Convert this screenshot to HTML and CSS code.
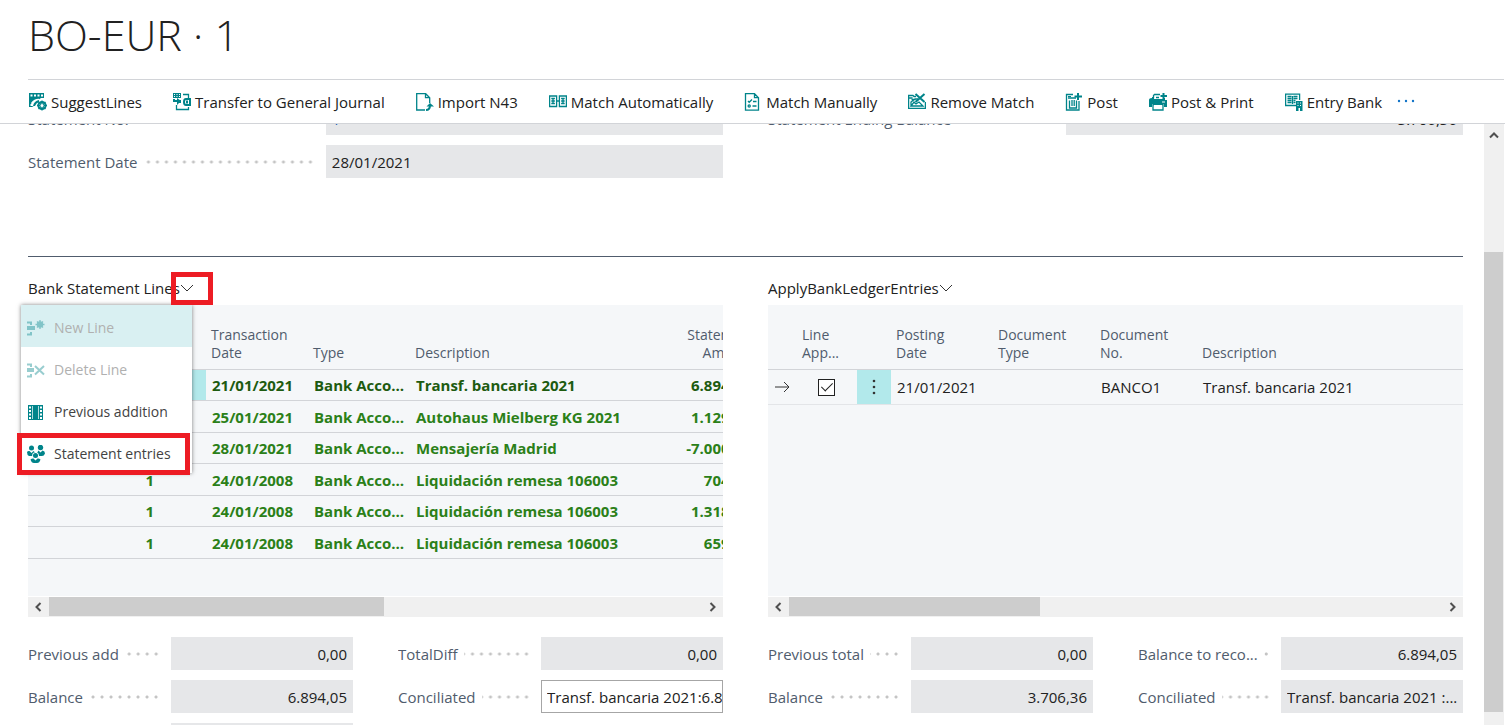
FILE: index.html
```html
<!DOCTYPE html>
<html lang="en">

<head>
    <meta charset="UTF-8">
    <meta name="viewport" content="width=device-width, initial-scale=1.0">
    <title>BO-EUR · 1</title>
    <link rel="stylesheet" href="styles.css">
</head>

<body>

    <header>
        <h1>BO-EUR · 1</h1>
        <nav class="toolbar">
            <button>
                <svg class="icon" viewBox="0 0 18 18"><path d="M0 0h15v5h-3l-7 5v4H0z"/><path class="w" d="M1.5 1.5h2v2h-2zM5 1.5h2v2H5zM8.500 1.500h2v2h-2zM12 1.500h2v2h-2zM1.500 11h2v2h-2zM2 10q4-5 9-4l-3 3-1 4-3 1z"/><path d="M4 13q1-5 6-6v2q-3 1-4 4z"/><circle class="s2" cx="13" cy="12.500" r="3.600"/><path class="s" d="M13 7.500v10M8 12.500h10M9.500 9l7 7M9.500 16l7-7"/><circle class="w" cx="13" cy="12.500" r="1.500"/></svg>
                SuggestLines
            </button>
            <button>
                <svg class="icon" viewBox="0 0 18 18"><path d="M0 0h8v5H0z"/><path class="w" d="M1 1h1v1H1zM3.500 1h1v1h-1zM6 1h1v1H6zM1 3h1v1H1zM3.500 3h1v1h-1zM6 3h1v1H6z"/><path class="s2" d="M1 6v2h4M7 7v3"/><path d="M4 5l4 3-4 4z"/><path class="s" d="M10 1.500h5.500v4M3.500 12v4.500h12V14"/><path class="s2" d="M17 6h-4q-2 0-2 3t2 3h4zM14 7.500v3"/></svg>
                Transfer to General Journal
            </button>
            <button>
                <svg class="icon" viewBox="0 0 18 18"><path class="s" d="M9 17H.700V.700h9l4 4V10M9.500.700v4h4"/><path class="s2" d="M10 17q4 0 4-5"/><path d="M10.500 13.500L14 10l4 3.500z"/></svg>
                Import N43
            </button>
            <button>
                <svg class="icon" viewBox="0 0 18 18"><path class="s" d="M.600 3h7v10.500h-7zM10.400 3h7v10.500h-7zM7.600 8h3M2.300 5.500h3.600M2.300 8h3.600M2.300 10.500h3.600M12.100 5.500h3.600M12.100 8h3.600M12.100 10.500h3.600M4 5v6M14 5v6"/></svg>
                Match Automatically
            </button>
            <button>
                <svg class="icon" viewBox="0 0 18 18"><path class="s" d="M1.500.700h9l4 4v12.500h-13zM10.500.700v4h4M4 8l1.200 1.300L8 6.500M9 8.500h3.500M8.500 13h4"/><circle class="s" cx="5.200" cy="13" r="1.100"/></svg>
                Match Manually
            </button>
            <button>
                <svg class="icon" viewBox="0 0 18 18"><path class="s" d="M8 3.500H6l-1-1H.600v12.900h16.800V9M.600 5h4"/><path class="s" d="M3 13V9l4-3h3M3 13h12l-4-4-3 2-2-2zM3.500 6.500h4"/><path class="s2" d="M7.500 1l9 8M16.500 1l-9 8"/></svg>
                Remove Match
            </button>
            <button>
                <svg class="icon" viewBox="0 0 18 18"><path class="s" d="M8 1.500H1.500v15.500h12.500V8M3 5h8M4.500 7.500v7.500h7V7.500M7 7v6M9.200 7v6"/><path d="M3 3h3v1H3z"/><path class="s2" d="M13 0v7M9.500 3.500H17"/></svg>
                Post
            </button>
            <button>
                <svg class="icon" viewBox="0 0 18 18"><path d="M3 4h2v2h9V5h2v2h2v7h-3v-3H3v3H0V7q0-2 3-2z"/><path class="s" d="M4.500 5.500v-3l1-1H11M4 11.500h10v5.500H4zM7 4.500h3"/><path class="s2" d="M14.500 0v6M11.500 3H18"/><path class="w" d="M13 8.500h3v1h-3zM5 12h8v4H5z"/></svg>
                Post &amp; Print
            </button>
            <button>
                <svg class="icon" viewBox="0 0 18 18"><path class="s" d="M11 12.500H.600V1.200h14V7M2.500 3.500h4M8.500 3.500h4M2.500 5.500h4M8.500 5.500h4M2.500 7.500h4M8.500 7.500h2M2.500 9.500h4M8.500 9.500h2M7.500 3v8"/><path d="M11 8h6.500v10H15v-3h-1.500v3H11z"/><path class="w" d="M12.500 9.500h1v1h-1zM15 9.500h1v1h-1zM12.500 12h1v1h-1zM15 12h1v1h-1z"/></svg>
                Entry Bank
            </button>
            <button class="more" aria-label="More options">
                <svg viewBox="0 0 18 18"><circle cx="2" cy="8" r="1.200"/><circle cx="9" cy="8" r="1.200"/><circle cx="16" cy="8" r="1.200"/></svg>
            </button>
        </nav>
    </header>

    <main>
        <div class="content">
            <section class="general">
                <div class="field">
                    <label for="statement-no">Statement No.</label>
                    <input id="statement-no" class="link" value="1" readonly>
                </div>
                <div class="field">
                    <label for="ending-balance">Statement Ending Balance</label>
                    <input id="ending-balance" class="num" value="3.706,36" readonly>
                </div>
                <div class="field">
                    <label for="statement-date">Statement Date</label>
                    <input id="statement-date" value="28/01/2021" readonly>
                </div>
            </section>

            <div class="parts">
                <section class="part">
                    <h2>
                        <button class="part-title">Bank Statement Lines<svg class="chevron" viewBox="0 0 14 8"><path d="M1 1l6 6 6-6"/></svg></button>
                        <span class="mark mark-arrow"></span>
                    </h2>
                    <ul class="menu">
                        <li><button class="selected" disabled><svg class="icon" viewBox="0 0 18 18"><path d="M0 7h8v4H0z"/><path class="s2" d="M0 3.500h4V6M0 15.500h4V13"/><path class="s" d="M13 1v9M8.500 5.500h9M10 2.500l6 6M16 2.500l-6 6"/><circle class="s" cx="13" cy="5.500" r="2.500"/></svg>New Line</button></li>
                        <li><button disabled><svg class="icon" viewBox="0 0 18 18"><path d="M0 7h7v4H0z"/><path class="s2" d="M0 3.500h4V6M0 15.500h4V13"/><path class="s2" d="M8 5l9 8.500M17 5l-9 8.500"/></svg>Delete Line</button></li>
                        <li><button><svg class="icon" viewBox="0 0 18 18"><path d="M1 2h15v15H1z"/><path class="w" d="M2 3.500h2v2H2zM2 7h2v2H2zM2 10.500h2v2H2zM2 14h2v2H2zM13 3.500h2v2h-2zM13 7h2v2h-2zM13 10.500h2v2h-2zM13 14h2v2h-2zM5 3h.700v13H5zM11.300 3h.700v13h-.700z"/></svg>Previous addition</button></li>
                        <li><button><svg class="icon" viewBox="0 0 18 18"><circle cx="4.500" cy="3" r="2.500"/><circle cx="13.500" cy="2.500" r="2.700"/><path d="M0 7q1-1.500 2.500-1L4.500 8l2-2 2 2-2 3H2q-2-1-2-4zM10 8l1.500-2.500 2 2 2-2Q18 6 18 8.500 17 11 15 11h-3z"/><circle class="w" cx="8.500" cy="10.500" r="3.300"/><circle cx="8.500" cy="10.500" r="2.500"/><path d="M3.500 14.500Q5 13 6.500 13.500l2 2 2-2q1.500-.500 3 1-1 3.500-3.500 3.500H7q-2.500 0-3.500-3.500z"/></svg>Statement entries</button><span class="mark mark-item"></span></li>
                    </ul>
                    <div class="grid">
                        <table class="lines">
                            <colgroup>
                                <col class="c-no"><col class="c-dots"><col class="c-text"><col class="c-text"><col class="c-desc"><col class="c-amount">
                            </colgroup>
                            <thead>
                                <tr><th></th><th></th><th>Transaction<br>Date</th><th>Type</th><th>Description</th><th class="num">Statement<br>Amount</th></tr>
                            </thead>
                            <tbody>
                                <tr class="current"><td></td><td class="dots"></td><td>21/01/2021</td><td>Bank Account</td><td>Transf. bancaria 2021</td><td class="num">6.894,05</td></tr>
                                <tr><td></td><td></td><td>25/01/2021</td><td>Bank Account</td><td>Autohaus Mielberg KG 2021</td><td class="num">1.129,00</td></tr>
                                <tr><td></td><td></td><td>28/01/2021</td><td>Bank Account</td><td>Mensajería Madrid</td><td class="num">-7.000,00</td></tr>
                                <tr><td class="num">1</td><td></td><td>24/01/2008</td><td>Bank Account</td><td>Liquidación remesa 106003</td><td class="num">704,00</td></tr>
                                <tr><td class="num">1</td><td></td><td>24/01/2008</td><td>Bank Account</td><td>Liquidación remesa 106003</td><td class="num">1.318,00</td></tr>
                                <tr><td class="num">1</td><td></td><td>24/01/2008</td><td>Bank Account</td><td>Liquidación remesa 106003</td><td class="num">659,00</td></tr>
                            </tbody>
                        </table>
                    </div>
                    <div class="hscroll">
                        <button aria-label="Scroll left"><svg viewBox="0 0 8 10"><path d="M5.500 1l-4 4 4 4"/></svg></button>
                        <div class="track"><div class="thumb wide"></div></div>
                        <button aria-label="Scroll right"><svg viewBox="0 0 8 10"><path d="M1.500 1l4 4-4 4"/></svg></button>
                    </div>
                    <div class="totals">
                        <div class="field">
                            <label for="previous-add">Previous add</label>
                            <input id="previous-add" class="num" value="0,00" readonly>
                        </div>
                        <div class="field">
                            <label for="total-diff">TotalDiff</label>
                            <input id="total-diff" class="num" value="0,00" readonly>
                        </div>
                        <div class="field">
                            <label for="balance">Balance</label>
                            <input id="balance" class="num" value="6.894,05" readonly>
                        </div>
                        <div class="field">
                            <label for="conciliated">Conciliated</label>
                            <input id="conciliated" class="long editable" value="Transf. bancaria 2021:6.8">
                        </div>
                        <div class="field">
                            <label for="total"></label>
                            <input id="total" class="num" aria-label="Total" readonly>
                        </div>
                    </div>
                </section>

                <section class="part">
                    <h2>
                        <button class="part-title">ApplyBankLedgerEntries<svg class="chevron" viewBox="0 0 14 8"><path d="M1 1l6 6 6-6"/></svg></button>
                    </h2>
                    <div class="grid">
                        <table class="entries">
                            <colgroup>
                                <col class="c-arrow"><col class="c-check"><col class="c-dots"><col class="c-text"><col class="c-text"><col class="c-text"><col>
                            </colgroup>
                            <thead>
                                <tr><th></th><th>Line<br>App...</th><th></th><th>Posting<br>Date</th><th>Document<br>Type</th><th>Document<br>No.</th><th>Description</th></tr>
                            </thead>
                            <tbody>
                                <tr>
                                    <td><svg class="arrow" viewBox="0 0 16 12"><path d="M1 6h14M10 1l5 5-5 5"/></svg></td>
                                    <td class="check"><input type="checkbox" aria-label="Line Applied" checked></td>
                                    <td class="dots"><button aria-label="Show more options"><svg viewBox="0 0 4 18"><circle cx="2" cy="3" r="1.300"/><circle cx="2" cy="9" r="1.300"/><circle cx="2" cy="15" r="1.300"/></svg></button></td>
                                    <td>21/01/2021</td><td></td><td>BANCO1</td><td>Transf. bancaria 2021</td>
                                </tr>
                            </tbody>
                        </table>
                    </div>
                    <div class="hscroll">
                        <button aria-label="Scroll left"><svg viewBox="0 0 8 10"><path d="M5.500 1l-4 4 4 4"/></svg></button>
                        <div class="track"><div class="thumb"></div></div>
                        <button aria-label="Scroll right"><svg viewBox="0 0 8 10"><path d="M1.500 1l4 4-4 4"/></svg></button>
                    </div>
                    <div class="totals">
                        <div class="field">
                            <label for="previous-total">Previous total</label>
                            <input id="previous-total" class="num" value="0,00" readonly>
                        </div>
                        <div class="field">
                            <label for="balance-reconcile">Balance to reco...</label>
                            <input id="balance-reconcile" class="num" value="6.894,05" readonly>
                        </div>
                        <div class="field">
                            <label for="ledger-balance">Balance</label>
                            <input id="ledger-balance" class="num" value="3.706,36" readonly>
                        </div>
                        <div class="field">
                            <label for="ledger-conciliated">Conciliated</label>
                            <input id="ledger-conciliated" class="long" value="Transf. bancaria 2021 :..." readonly>
                        </div>
                    </div>
                </section>
            </div>
        </div>

        <div class="vscroll">
            <button aria-label="Scroll up"><svg viewBox="0 0 10 8"><path d="M1 6.500l4-4 4 4"/></svg></button>
            <div class="vthumb"></div>
        </div>
    </main>

</body>

</html>
```
FILE: styles.css
```css
* {
    box-sizing: border-box;
}

body {
    font-family: "Segoe UI", "Open Sans", "Noto Sans", sans-serif;
    font-size: 15px;
    line-height: 20px;
    margin: 0;
    height: 100vh;
    overflow: hidden;
    display: flex;
    flex-direction: column;
    background-color: #fff;
    color: #212121;
}

button,
input {
    font: inherit;
    color: inherit;
}

button {
    background: none;
    border: none;
    padding: 0;
    cursor: pointer;
}

svg {
    display: block;
}

/* icons */

.icon {
    width: 18px;
    height: 18px;
    flex: none;
    fill: #00848a;
}

.icon .w {
    fill: #fff;
}

.icon .s,
.icon .s2 {
    fill: none;
    stroke: #00848a;
    stroke-width: 1.3;
}

.icon .s2 {
    stroke-width: 2;
}

/* header */

header {
    border-bottom: 1px solid #d2d4d8;
}

h1 {
    margin: 0 1px 0 28px;
    padding: 5px 0 14px;
    border-bottom: 1px solid #d2d4d8;
    font-size: 43px;
    line-height: 60px;
    font-weight: 300;
}

.toolbar {
    display: flex;
    gap: 31px;
    height: 43px;
    padding: 0 0 0 29px;
}

.toolbar button {
    display: flex;
    align-items: center;
    gap: 4px;
    white-space: nowrap;
}

.toolbar .more {
    margin-left: -16px;
}

.more svg {
    width: 18px;
    height: 18px;
    fill: #1173c7;
}

/* page body */

main {
    flex: 1;
    min-height: 0;
    display: flex;
    overflow: hidden;
}

.content {
    flex: 1;
    min-width: 0;
    margin-top: -22px;
    padding: 0 21px 0 28px;
}

.general {
    display: grid;
    grid-template-columns: 1fr 1fr;
    gap: 10px 45px;
    padding-bottom: 78px;
    border-bottom: 1px solid #505c6d;
}

.field {
    display: grid;
    grid-template-columns: 3fr 4fr;
    height: 33px;
}

.field label {
    display: flex;
    align-items: center;
    padding-right: 10px;
    color: #505c6d;
    white-space: nowrap;
    overflow: hidden;
}

/* dotted leader between label and value */
.field label::after {
    content: "";
    flex: 1;
    height: 10px;
    margin-left: 6px;
    background: radial-gradient(circle at 4px 5px, #c4c4c4 1px, transparent 2px) right center / 9px 10px repeat-x;
}

.field input {
    width: 100%;
    min-width: 0;
    border: 1px solid #e6e7e9;
    border-radius: 0;
    background-color: #e6e7e9;
    padding: 0 5px;
    outline: none;
}

.field .link {
    color: #1a5fb4;
}

.field .long {
    padding-right: 0;
}

.field .editable {
    border-color: #a6a6a6;
    background-color: #fff;
}

.num {
    text-align: right;
}

/* the two parts */

.parts {
    display: grid;
    grid-template-columns: 1fr 1fr;
    gap: 45px;
}

.part {
    min-width: 0;
    position: relative;
}

h2 {
    margin: 0;
    height: 48px;
    padding-top: 21px;
    font-size: 15px;
    line-height: 20px;
    font-weight: 400;
    position: relative;
}

.part-title {
    display: flex;
    align-items: center;
}

.chevron {
    width: 14px;
    height: 8px;
    fill: none;
    stroke: #333;
}

.grid {
    height: 291px;
    background-color: #f5f7f9;
    overflow: hidden;
}

table {
    border-collapse: separate;
    border-spacing: 0;
    table-layout: fixed;
    width: 100%;
}

.lines {
    width: 732px;
}

.c-no {
    width: 144px;
}

.c-dots {
    width: 34px;
}

.c-text {
    width: 102px;
}

.c-desc {
    width: 255px;
}

.c-arrow {
    width: 29px;
}

.c-check {
    width: 60px;
}

th {
    height: 65px;
    padding: 0 5px 7px;
    border-bottom: 1px solid #d2d4d8;
    color: #505c6d;
    font-size: 14px;
    line-height: 18px;
    font-weight: 400;
    text-align: left;
    vertical-align: bottom;
    white-space: nowrap;
}

th.num {
    text-align: right;
}

td {
    padding: 0 2px 0 6px;
    border-bottom: 1px solid #d2d4d8;
    overflow: hidden;
    text-overflow: ellipsis;
    white-space: nowrap;
}

.lines td {
    height: 32px;
    color: #2b8018;
    font-weight: 700;
}

.lines tr:nth-child(odd) td {
    height: 31px;
}

.lines td:last-child {
    padding-right: 9px;
}

.lines td:first-child {
    padding-right: 18px;
}

.lines .current td {
    color: #1d5b10;
}

td.dots {
    background-color: #b2e9eb;
    padding: 0;
}

.entries td {
    height: 35px;
    border-color: #e3e5e8;
}

.dots button {
    width: 100%;
    height: 34px;
    display: grid;
    place-items: center;
}

.dots svg {
    width: 4px;
    height: 18px;
    fill: #333;
}

.arrow {
    width: 16px;
    height: 12px;
    fill: none;
    stroke: #333;
}

.check input {
    appearance: none;
    display: grid;
    place-items: center;
    width: 17px;
    height: 17px;
    margin: 0 0 0 16px;
    border: 1px solid #212121;
    background-color: #fff;
}

.check input:checked::after {
    content: "";
    width: 5px;
    height: 10px;
    margin-bottom: 3px;
    border: solid #212121;
    border-width: 0 1px 1px 0;
    transform: rotate(45deg);
}

.check {
    padding: 0 5px;
}

/* scrollbars */

.hscroll {
    display: flex;
    height: 20px;
    margin: 1px 0 20px;
    background-color: #f0f0f0;
}

.hscroll button {
    width: 21px;
    display: grid;
    place-items: center;
}

.hscroll svg {
    width: 8px;
    height: 10px;
}

.hscroll svg,
.vscroll svg {
    fill: none;
    stroke: #505050;
    stroke-width: 2;
}

.track {
    flex: 1;
}

.thumb {
    width: 38.5%;
    height: 19px;
    background-color: #cdcdcd;
}

.thumb.wide {
    width: 51.3%;
}

.vscroll {
    width: 20px;
    margin-right: 1px;
    background-color: #f0f0f0;
    display: flex;
    flex-direction: column;
}

.vscroll button {
    height: 21px;
    display: grid;
    place-items: center;
}

.vscroll svg {
    width: 10px;
    height: 8px;
}

.vthumb {
    height: 460px;
    margin: auto 1px 13px 0;
    background-color: #cdcdcd;
}

.totals {
    display: grid;
    grid-template-columns: 1fr 1fr;
    gap: 10px 45px;
}

.totals .field {
    grid-template-columns: 11fr 14fr;
}

/* drop-down menu over the lines */

.menu {
    position: absolute;
    top: 48px;
    left: -7px;
    z-index: 1;
    width: 171px;
    margin: 0;
    padding: 0;
    list-style: none;
    background-color: #fff;
    box-shadow: 0 0 4px rgba(0, 0, 0, 0.5);
}

.menu li {
    position: relative;
}

.menu button {
    display: flex;
    align-items: center;
    gap: 9px;
    width: 100%;
    height: 42px;
    padding: 4px 0 0 6px;
    font-size: 14px;
    white-space: nowrap;
    color: #424242;
}

.menu button:disabled {
    color: #b0b0b0;
}

.menu button:disabled .icon {
    opacity: 0.4;
}

.menu .selected {
    background-color: #d9f0f2;
}

/* red call-outs */

.mark {
    position: absolute;
    z-index: 2;
    border: 5px solid #ed1c24;
    pointer-events: none;
}

.mark-arrow {
    top: 15px;
    left: 143px;
    width: 42px;
    height: 33px;
}

.mark-item {
    top: 2px;
    left: -4px;
    width: 173px;
    height: 42px;
}
```
